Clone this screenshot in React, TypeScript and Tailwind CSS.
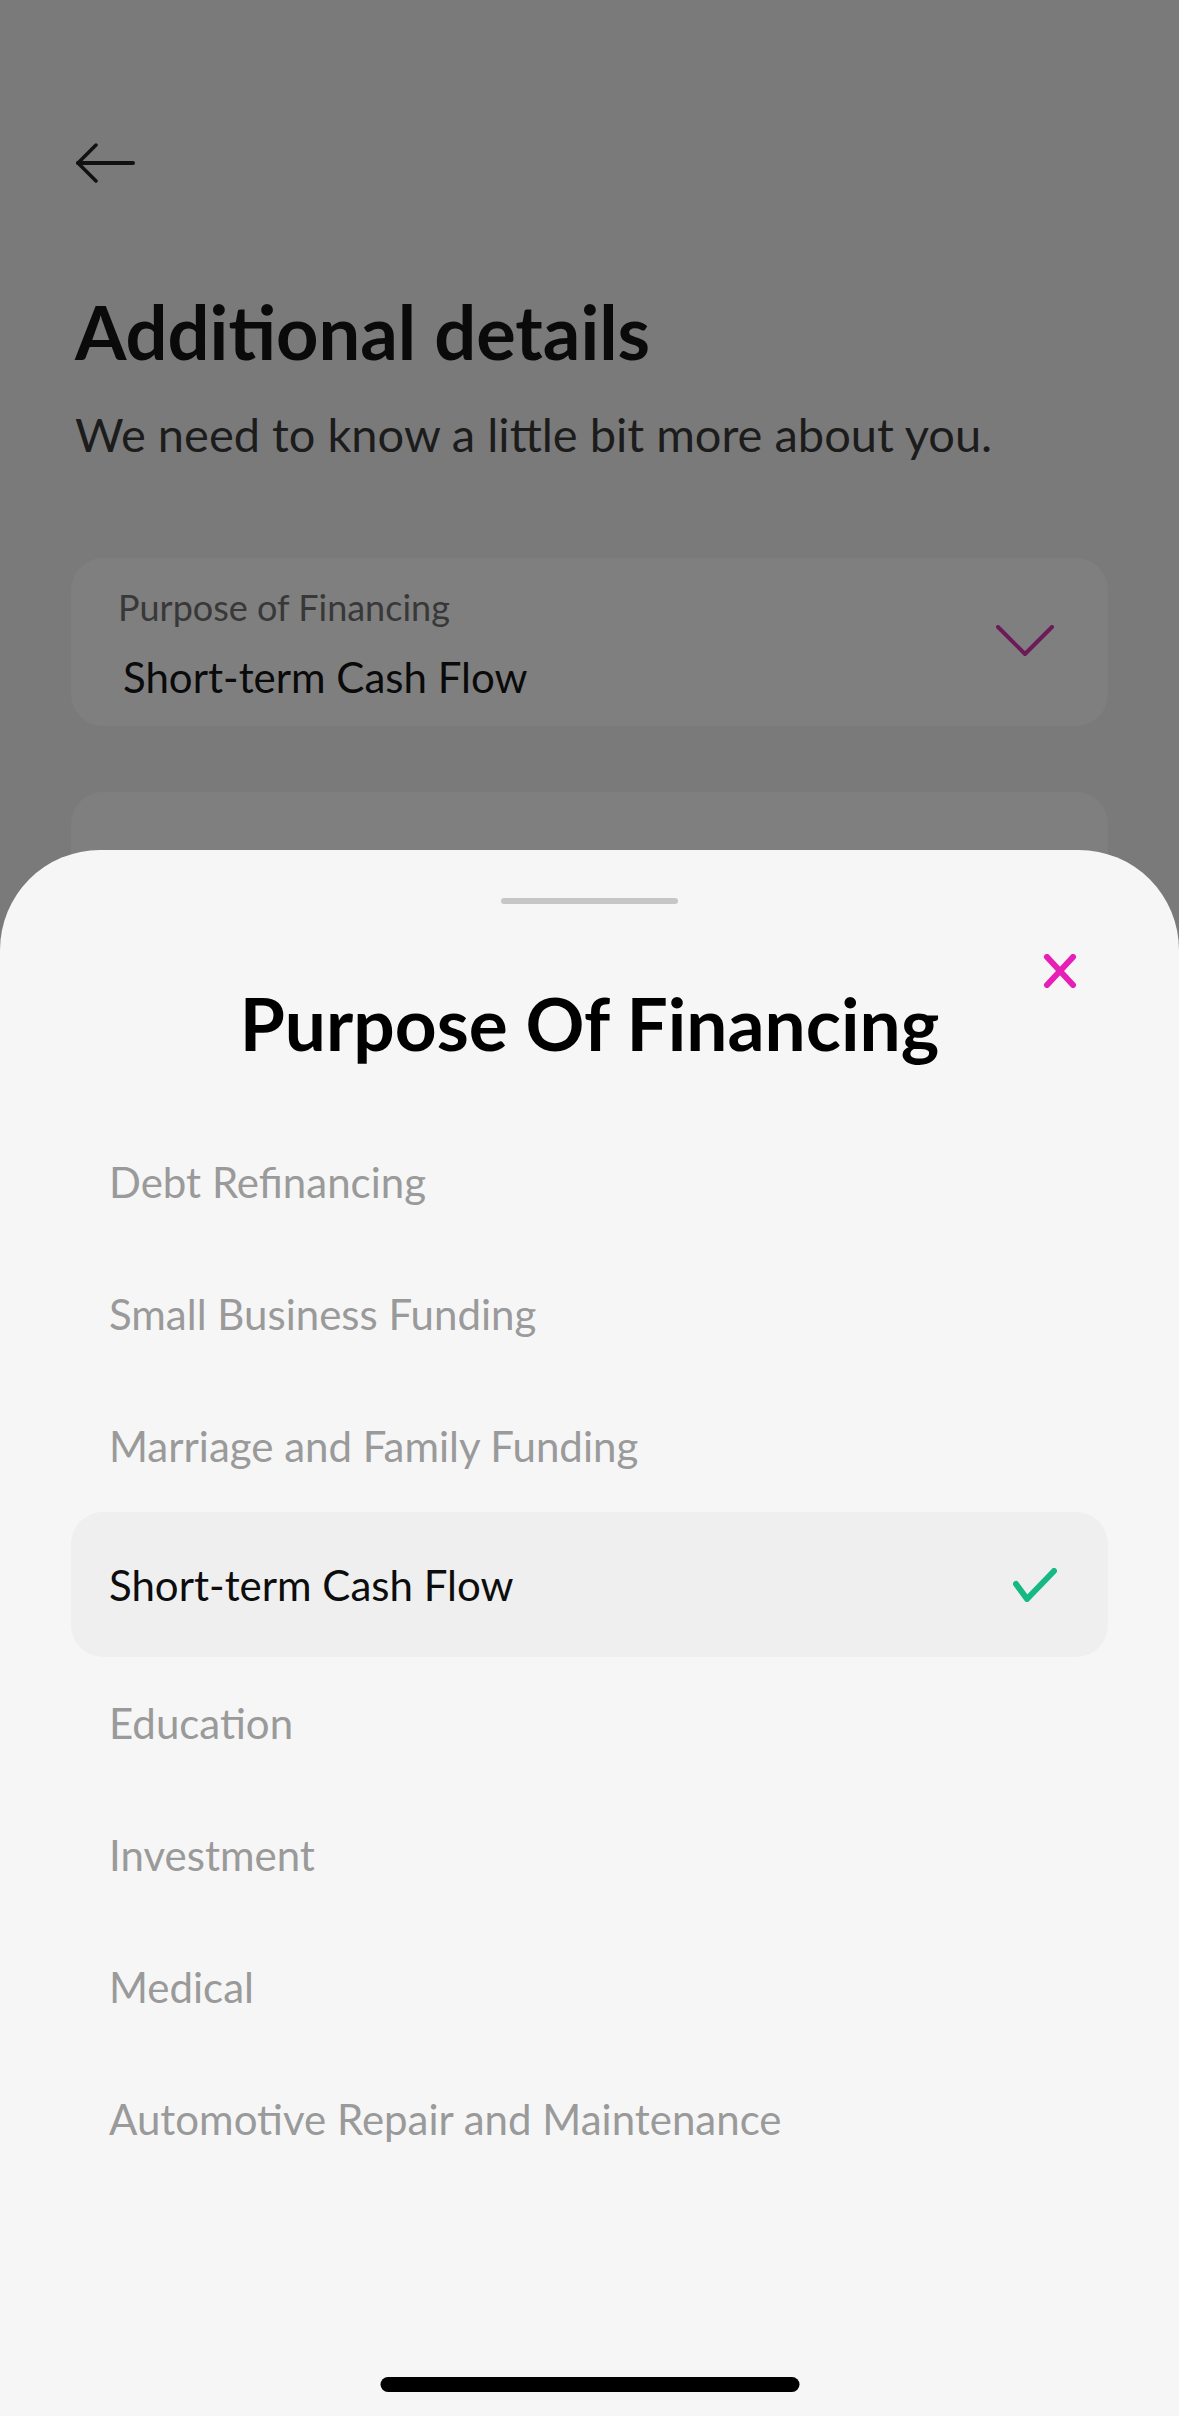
import React from "react";

const items = [
  "Debt Refinancing",
  "Small Business Funding",
  "Marriage and Family Funding",
  "Short-term Cash Flow",
  "Education",
  "Investment",
  "Medical",
  "Automotive Repair and Maintenance",
];

export default function App() {
  const selected = "Short-term Cash Flow";
  return (
    <div
      className="relative h-[2416px] w-[1179px] overflow-hidden bg-[#7a7a7a]"
      style={{ fontFamily: "Lato, 'Noto Sans', sans-serif" }}
    >
      {/* Background page (dimmed) */}
      <div className="flex flex-col px-[71px] pt-[143px]">
        <div className="ml-[4px] h-[40px] w-[60px]">
          <svg width="60" height="40" viewBox="0 0 60 40" fill="none">
            <path d="M58 20H3" stroke="#111" strokeWidth="4" strokeLinecap="round" />
            <path d="M21 2L3 20L21 38" stroke="#111" strokeWidth="3.5" strokeLinecap="round" strokeLinejoin="round" />
          </svg>
        </div>
        <h1 className="ml-[4px] mt-[108px] text-[74px] font-bold leading-[82px] text-[#0a0a0a]">
          Additional details
        </h1>
        <p className="ml-[4px] mt-[32px] text-[47px] leading-[58px] text-[#1c1c1c]">
          We need to know a little bit more about you.
        </p>
        <div className="mt-[95px] flex h-[168px] items-center justify-between rounded-[32px] bg-[#7f7f7f] pl-[47px] pr-[54px]">
          <div className="mt-[4px] flex flex-col">
            <span className="text-[36px] leading-[40px] text-[#383838]">Purpose of Financing</span>
            <span className="ml-[5px] mt-[25px] text-[42px] leading-[50px] text-[#0a0a0a]">
              Short-term Cash Flow
            </span>
          </div>
          <svg width="58" height="32" viewBox="0 0 58 32" fill="none" className="mt-[-2px]">
            <path d="M2 2L29 29L56 2" stroke="#6c1a58" strokeWidth="4" strokeLinecap="round" strokeLinejoin="round" />
          </svg>
        </div>
        <div className="mt-[66px] h-[200px] rounded-[32px] bg-[#7f7f7f]" />
      </div>

      {/* Bottom sheet */}
      <div className="absolute left-0 right-0 top-[850px] bottom-0 rounded-t-[100px] bg-[#f6f6f6]">
        <div className="flex flex-col pt-[48px]">
          <div className="mx-auto h-[6px] w-[177px] rounded-full bg-[#c6c6c6]" />
          <div className="relative mt-[77px]">
            <h2 className="text-center text-[73px] font-bold leading-[84px] text-black">
              Purpose Of Financing
            </h2>
            <button className="absolute right-[102px] top-[-27px] flex h-[34px] w-[34px] items-center justify-center">
              <svg width="34" height="34" viewBox="0 0 34 34" fill="none">
                <path d="M4 3L30 31M30 3L4 31" stroke="#e61fb6" strokeWidth="6" strokeLinecap="round" />
              </svg>
            </button>
          </div>
          <div className="mt-[51px] flex flex-col px-[71px]">
            {items.map((it) => {
              const isSel = it === selected;
              return (
                <div
                  key={it}
                  className={
                    isSel
                      ? "flex h-[145px] items-center justify-between rounded-[32px] bg-[#efefef] pl-[38px] pr-[51px]"
                      : "flex h-[132px] items-center pl-[38px]"
                  }
                >
                  <span
                    className={
                      isSel
                        ? "text-[42px] leading-[50px] text-[#0d0d0d]"
                        : "text-[42px] leading-[50px] text-[#9a9a9a]"
                    }
                  >
                    {it}
                  </span>
                  {isSel && (
                    <svg width="44" height="34" viewBox="0 0 44 34" fill="none">
                      <path d="M3 16L14 31L41 3" stroke="#16b884" strokeWidth="6" strokeLinecap="round" strokeLinejoin="round" />
                    </svg>
                  )}
                </div>
              );
            })}
          </div>
        </div>
        <div className="absolute bottom-[24px] left-1/2 h-[15px] w-[419px] -translate-x-1/2 rounded-full bg-black" />
      </div>
    </div>
  );
}
